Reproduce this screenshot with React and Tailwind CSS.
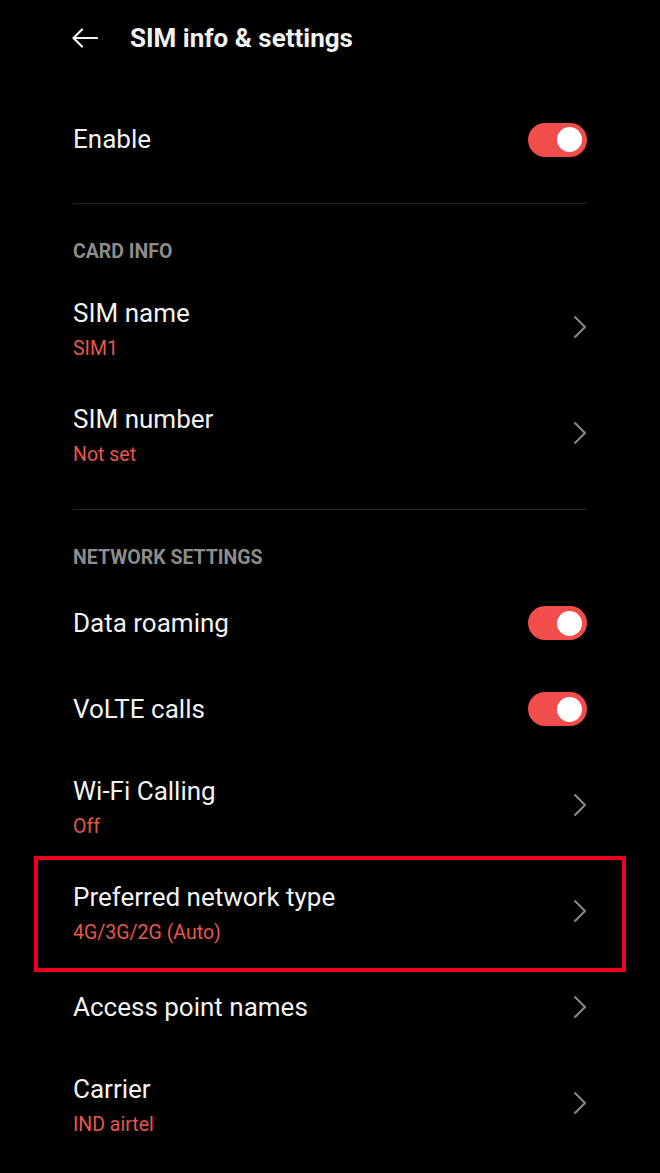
import React from 'react';

const Chevron = () => (
    <svg width="14" height="24" viewBox="0 0 14 24" fill="none" className="shrink-0">
        <path d="M2 2 L12 12 L2 22" stroke="#8a8a8a" strokeWidth="2" strokeLinecap="round" strokeLinejoin="round" />
    </svg>
);

const Toggle = () => (
    <div className="w-[59px] h-[34px] rounded-full bg-[#f24d4d] flex items-center justify-end pr-[5px] shrink-0">
        <div className="w-[25px] h-[25px] rounded-full bg-white"></div>
    </div>
);

const Divider = () => <div className="mx-[73px] h-[1px] bg-[#262626]"></div>;

const SectionHeader = ({ children }) => (
    <div className="h-[70px] pt-[26px] px-[73px] flex items-center text-[19.5px] font-bold text-[#8c8c8c]">
        {children}
    </div>
);

const SwitchRow = ({ title, height = 'h-[86px]' }) => (
    <div className={`${height} px-[73px] flex items-center justify-between`}>
        <span className="text-[26px] text-[#f2f2f2]">{title}</span>
        <Toggle />
    </div>
);

const LinkRow = ({ title, sub }) => (
    <div className={`${sub ? 'h-[106px]' : 'h-[86px]'} px-[73px] flex items-center justify-between`}>
        <div className={`flex flex-col gap-[8px] ${sub ? 'pt-[4px]' : ''}`}>
            <span className="text-[26px] leading-[32px] text-[#f2f2f2]">{title}</span>
            {sub && <span className="text-[19.5px] leading-[24px] text-[#e5574e]">{sub}</span>}
        </div>
        <Chevron />
    </div>
);

const App = () => {
    return (
        <div className="w-[660px] min-h-[1173px] bg-black font-['Roboto','Liberation_Sans',sans-serif] overflow-hidden">
            {/* Header */}
            <div className="h-[76px] flex items-center pl-[72px] gap-[32px]">
                <svg width="26" height="20" viewBox="0 0 26 20" fill="none">
                    <path d="M25 10 H2 M10 1.5 L1.5 10 L10 18.5" stroke="#f2f2f2" strokeWidth="2.2" strokeLinecap="round" strokeLinejoin="round" />
                </svg>
                <h1 className="text-[26px] font-bold text-[#f2f2f2]">SIM info &amp; settings</h1>
            </div>

            <SwitchRow title="Enable" height="h-[127px]" />
            <Divider />

            <SectionHeader>CARD INFO</SectionHeader>
            <LinkRow title="SIM name" sub="SIM1" />
            <LinkRow title="SIM number" sub="Not set" />
            <div className="h-[23px]"></div>
            <Divider />

            <SectionHeader>NETWORK SETTINGS</SectionHeader>
            <SwitchRow title="Data roaming" />
            <SwitchRow title="VoLTE calls" />
            <LinkRow title="Wi-Fi Calling" sub="Off" />

            <div className="relative">
                <LinkRow title="Preferred network type" sub="4G/3G/2G (Auto)" />
                <div className="absolute top-[-2px] bottom-[-8px] left-[34px] right-[34px] border-4 border-[#e8001d] pointer-events-none"></div>
            </div>

            <LinkRow title="Access point names" />
            <LinkRow title="Carrier" sub="IND airtel" />
        </div>
    );
};

export default App;
